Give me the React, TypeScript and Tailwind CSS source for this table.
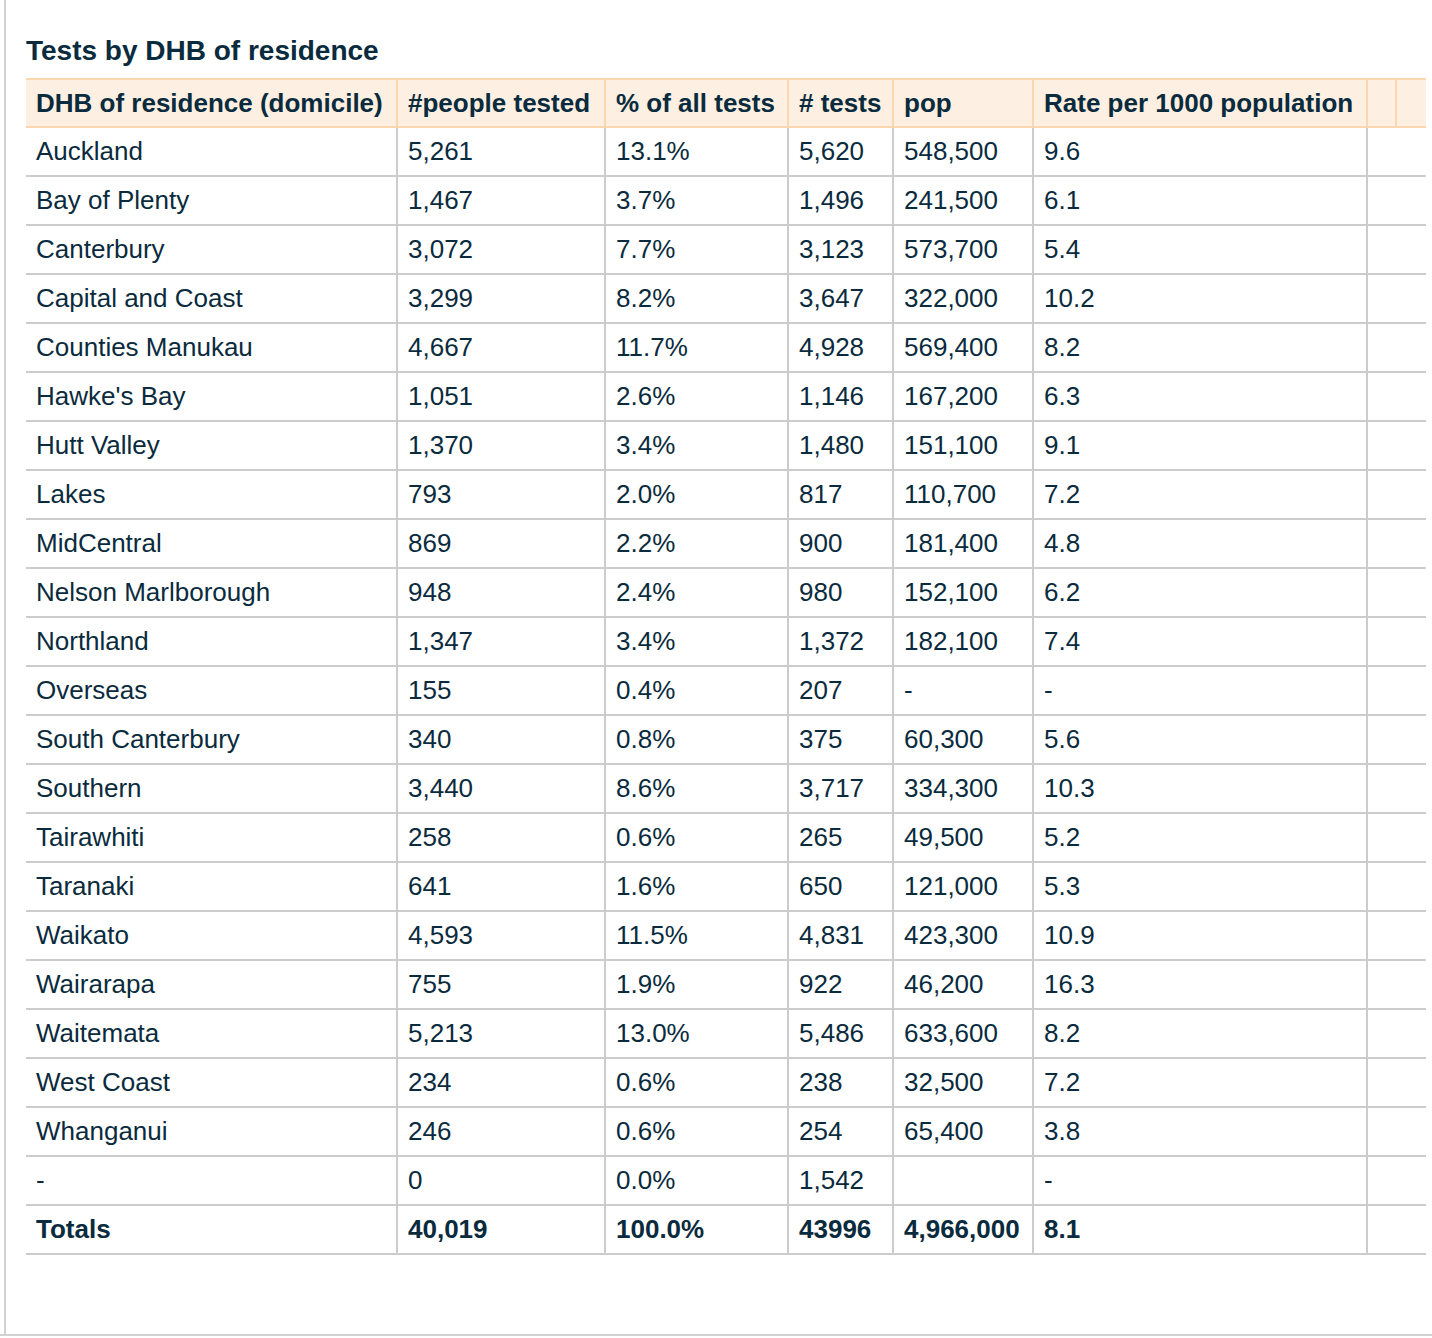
import React from "react";

type Row = [string, string, string, string, string, string];

const rows: Row[] = [
  ["Auckland", "5,261", "13.1%", "5,620", "548,500", "9.6"],
  ["Bay of Plenty", "1,467", "3.7%", "1,496", "241,500", "6.1"],
  ["Canterbury", "3,072", "7.7%", "3,123", "573,700", "5.4"],
  ["Capital and Coast", "3,299", "8.2%", "3,647", "322,000", "10.2"],
  ["Counties Manukau", "4,667", "11.7%", "4,928", "569,400", "8.2"],
  ["Hawke's Bay", "1,051", "2.6%", "1,146", "167,200", "6.3"],
  ["Hutt Valley", "1,370", "3.4%", "1,480", "151,100", "9.1"],
  ["Lakes", "793", "2.0%", "817", "110,700", "7.2"],
  ["MidCentral", "869", "2.2%", "900", "181,400", "4.8"],
  ["Nelson Marlborough", "948", "2.4%", "980", "152,100", "6.2"],
  ["Northland", "1,347", "3.4%", "1,372", "182,100", "7.4"],
  ["Overseas", "155", "0.4%", "207", "-", "-"],
  ["South Canterbury", "340", "0.8%", "375", "60,300", "5.6"],
  ["Southern", "3,440", "8.6%", "3,717", "334,300", "10.3"],
  ["Tairawhiti", "258", "0.6%", "265", "49,500", "5.2"],
  ["Taranaki", "641", "1.6%", "650", "121,000", "5.3"],
  ["Waikato", "4,593", "11.5%", "4,831", "423,300", "10.9"],
  ["Wairarapa", "755", "1.9%", "922", "46,200", "16.3"],
  ["Waitemata", "5,213", "13.0%", "5,486", "633,600", "8.2"],
  ["West Coast", "234", "0.6%", "238", "32,500", "7.2"],
  ["Whanganui", "246", "0.6%", "254", "65,400", "3.8"],
  ["-", "0", "0.0%", "1,542", "", "-"],
];

const totals: Row = ["Totals", "40,019", "100.0%", "43996", "4,966,000", "8.1"];

const headers = [
  "DHB of residence (domicile)",
  "#people tested",
  "% of all tests",
  "# tests",
  "pop",
  "Rate per 1000 population",
];

function BodyRow({ row, bold }: { row: Row; bold?: boolean }) {
  return (
    <tr className={bold ? "font-bold" : ""}>
      {row.map((cell, i) => (
        <td
          key={i}
          className="border-b-2 border-r-2 border-[#cccccc] pl-[10px] py-[9px] leading-[29px] whitespace-nowrap"
        >
          {cell}
        </td>
      ))}
      <td colSpan={2} className="border-b-2 border-[#cccccc]" />
    </tr>
  );
}

export default function App() {
  return (
    <div className="w-[1432px] h-[1338px] bg-white overflow-hidden font-['Liberation_Sans',Arial,sans-serif] text-[#0a2b3d]">
      <div className="h-[1336px] border-b-2 border-[#d2d2d2]">
        <div className="ml-[4px] h-full border-l-2 border-[#d2d2d2] pl-[20px] pt-[35px]">
          <h2 className="text-[28px] leading-[32px] font-bold mb-[11px]">
            Tests by DHB of residence
          </h2>
          <table className="table-fixed w-[1400px] border-separate border-spacing-0 text-[26px]">
            <colgroup>
              <col className="w-[372px]" />
              <col className="w-[208px]" />
              <col className="w-[183px]" />
              <col className="w-[105px]" />
              <col className="w-[140px]" />
              <col className="w-[334px]" />
              <col className="w-[29px]" />
              <col className="w-[29px]" />
            </colgroup>
            <thead>
              <tr className="bg-[#fdefe1]">
                {headers.map((h) => (
                  <th
                    key={h}
                    className="border-t-2 border-b-2 border-r-2 border-[#fbd6ae] pl-[10px] py-[9px] leading-[28px] text-left font-bold whitespace-nowrap"
                  >
                    {h}
                  </th>
                ))}
                <th className="border-t-2 border-b-2 border-r-2 border-[#fbd6ae]" />
                <th className="border-t-2 border-b-2 border-[#fbd6ae]" />
              </tr>
            </thead>
            <tbody>
              {rows.map((r, i) => (
                <BodyRow key={i} row={r} />
              ))}
              <BodyRow row={totals} bold />
            </tbody>
          </table>
        </div>
      </div>
    </div>
  );
}
